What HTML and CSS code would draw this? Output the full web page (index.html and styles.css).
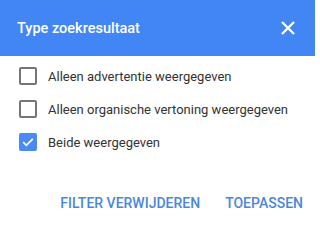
FILE: index.html
```html
<!DOCTYPE html>
<html>
<head>
<meta charset="utf-8">
<link rel="stylesheet" href="styles.css">
</head>
<body>
<div class="dialog">
  <div class="header">
    <span class="title">Type zoekresultaat</span>
    <svg class="close" width="14" height="14" viewBox="0 0 14 14"><path d="M1 1 L13 13 M13 1 L1 13" stroke="#fff" stroke-width="2.4" fill="none"/></svg>
  </div>
  <div class="options">
    <div class="option"><span class="box"></span><span class="label">Alleen advertentie weergegeven</span></div>
    <div class="option"><span class="box"></span><span class="label">Alleen organische vertoning weergegeven</span></div>
    <div class="option"><span class="box checked"><svg width="18" height="18" viewBox="0 0 18 18"><path d="M4.2 9.2 L7.4 12.3 L13.8 5.9" stroke="#fff" stroke-width="1.8" fill="none"/></svg></span><span class="label">Beide weergegeven</span></div>
  </div>
  <div class="actions">
    <span class="btn">FILTER VERWIJDEREN</span>
    <span class="btn">TOEPASSEN</span>
  </div>
</div>
</body>
</html>
```
FILE: styles.css
```css
html, body { margin: 0; padding: 0; background: #fff; }
body { font-family: Roboto, "Liberation Sans", sans-serif; width: 315px; height: 226px; overflow: hidden; }
.dialog { display: flex; flex-direction: column; }
.header {
  height: 56px; background: #4285f4; display: flex; align-items: center;
  justify-content: space-between; padding: 0 20px 0 17px;
}
.title { color: #fff; font-size: 14.5px; font-weight: 500; }
.close { display: block; }
.options { display: flex; flex-direction: column; padding: 11px 0 0 19px; gap: 15px; }
.option { display: flex; align-items: center; height: 18px; }
.box {
  width: 18px; height: 18px; box-sizing: border-box; border: 2px solid #757575;
  border-radius: 2px; margin-right: 11px; display: flex; align-items: center; justify-content: center;
}
.box.checked { background: #4a8af4; border-color: #4a8af4; }
.box.checked svg { flex: none; margin: -2px; }
.label { font-size: 13px; color: #333; }
.actions { display: flex; justify-content: flex-end; gap: 25px; padding: 44px 12px 0 0; }
.btn { color: #4a86e0; font-size: 14px; font-weight: 500; }
```
